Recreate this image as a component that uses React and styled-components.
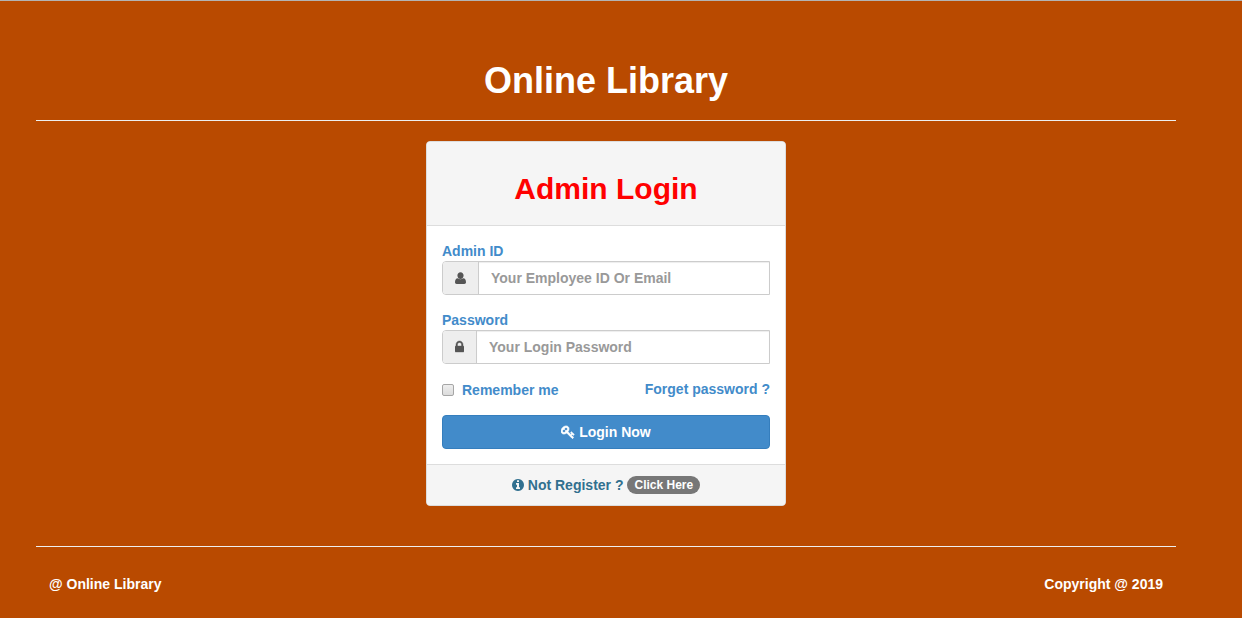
import React from "react";
import styled, { createGlobalStyle } from "styled-components";

const GlobalStyle = createGlobalStyle`
  *, *::before, *::after { box-sizing: border-box; }
  body {
    margin: 0;
    background: #b94a00;
    color: #fff;
    font: bold 14px/20px "Liberation Sans", Arial, Helvetica, sans-serif;
  }
`;

const Page = styled.div`
  border-top: 1px solid #b3b3b3;
  padding-right: 30px;
`;

const Container = styled.div`
  max-width: 1170px;
  margin: 0 auto;
  padding: 60px 15px 0;
`;

const SiteTitle = styled.h1`
  margin: 0;
  font-size: 36px;
  line-height: 39px;
  text-align: center;
`;

const Divider = styled.hr`
  margin: 20px 0;
  border: 0;
  border-top: 1px solid #eee;
`;

const Panel = styled.main`
  max-width: 360px;
  margin: 0 auto 40px;
  background: #fff;
  border: 1px solid #ddd;
  border-radius: 4px;
  overflow: hidden;
`;

const PanelHeader = styled.header`
  padding: 30px 15px 20px;
  background: #f5f5f5;
  border-bottom: 1px solid #ddd;
`;

const PanelTitle = styled.h2`
  margin: 0;
  color: #f00;
  font-size: 30px;
  line-height: 33px;
  text-align: center;
`;

const Form = styled.form`
  display: flex;
  flex-direction: column;
  gap: 15px;
  padding: 15px;
`;

const Field = styled.div`
  display: flex;
  flex-direction: column;
`;

const Label = styled.label`
  color: #428bca;
`;

const InputGroup = styled.div`
  display: flex;
  height: 34px;
  border: 1px solid #ccc;
  border-radius: 4px 0 0 4px;
`;

const Addon = styled.span`
  display: flex;
  align-items: center;
  padding: 0 12px;
  color: #555;
  background: #eee;
  border-right: 1px solid #ccc;
  border-radius: 3px 0 0 3px;
`;

const TextInput = styled.input`
  flex: 1;
  min-width: 0;
  padding: 0 12px;
  border: 0;
  background: #fff;
  box-shadow: inset 0 1px 1px rgba(0, 0, 0, 0.075);
  color: #555;
  font: inherit;
  &::placeholder { color: #999; opacity: 1; }
`;

const Options = styled.div`
  display: flex;
  justify-content: space-between;
  height: 21px;
`;

const Remember = styled.label`
  display: flex;
  align-items: flex-end;
  gap: 8px;
  color: #428bca;
`;

const Checkbox = styled.input`
  appearance: none;
  width: 12px;
  height: 12px;
  margin: 0 0 4px;
  border: 1px solid #a6a6a6;
  border-radius: 2px;
  background: linear-gradient(#eee, #dcdcdc);
  &:checked { background: #428bca; }
`;

const TextLink = styled.a`
  color: #428bca;
  text-decoration: none;
`;

const LoginButton = styled.button`
  display: flex;
  align-items: center;
  justify-content: center;
  gap: 4px;
  height: 34px;
  color: #fff;
  background: #428bca;
  border: 1px solid #357ebd;
  border-radius: 4px;
  font: inherit;
  cursor: pointer;
`;

const PanelFooter = styled.footer`
  display: flex;
  align-items: center;
  justify-content: center;
  gap: 4px;
  padding: 10px 15px;
  color: #31708f;
  background: #f5f5f5;
  border-top: 1px solid #ddd;
`;

const Pill = styled.a`
  padding: 2px 7px;
  color: #fff;
  background: #777;
  border-radius: 10px;
  font-size: 12px;
  line-height: 14px;
  text-decoration: none;
`;

const PageFooter = styled.footer`
  display: flex;
  justify-content: space-between;
  padding: 7px 13px 24px;
`;

const Icon = styled.svg`
  display: block;
  flex: none;
  height: 14px;
  fill: currentColor;
  stroke: currentColor;
`;

const glyphs = {
  user: {
    box: "0 0 11 14",
    width: 11,
    weight: 0,
    d: "M5.500 1.200C7.300 1.200 8.600 2.600 8.600 4.500S7.300 8 5.500 8 2.400 6.400 2.400 4.500 3.700 1.200 5.500 1.200zM2.800 7.200C4.200 8.700 6.800 8.700 8.200 7.200 10.200 7.300 11 9 11 11.300 11 12.400 10.300 13 9.300 13H1.700C.7 13 0 12.400 0 11.300 0 9 .8 7.300 2.800 7.200z",
  },
  lock: {
    box: "0 0 1152 1792",
    width: 9,
    weight: 50,
    d: "M320 768h512v-192q0-106-75-181t-181-75-181 75-75 181v192zm832 96v576q0 40-28 68t-68 28h-960q-40 0-68-28t-28-68v-576q0-40 28-68t68-28h32v-192q0-184 132-316t316-132 316 132 132 316v192h32q40 0 68 28t28 68z",
  },
  key: {
    box: "0 0 1792 1792",
    width: 14,
    weight: 90,
    d: "M832 512q0-80-56-136t-136-56-136 56-56 136q0 42 19 83-41-19-83-19-80 0-136 56t-56 136 56 136 136 56 136-56 56-136q0-42-19-83 41 19 83 19 80 0 136-56t56-136zm851 704q0 17-49 66t-66 49q-9 0-28.5-16t-36.5-33-38.5-40-24.5-26l-96 96 220 220q28 28 28 68 0 42-39 81t-81 39q-40 0-68-28l-671-671q-176 131-365 131-163 0-265.500-102.500t-102.500-265.500q0-160 95-313t248-248 313-95q163 0 265.500 102.500t102.500 265.500q0 189-131 365l355 355 96-96q-3-3-26-24.500t-40-38.500-33-36.500-16-28.500q0-17 49-66t66-49q13 0 23 10 6 6 46 44.500t82 79.500 86.500 86 73 78 28.500 41z",
  },
  info: {
    box: "0 0 1536 1792",
    width: 12,
    weight: 0,
    d: "M1024 1376v-160q0-14-9-23t-23-9h-96v-512q0-14-9-23t-23-9h-320q-14 0-23 9t-9 23v160q0 14 9 23t23 9h96v320h-96q-14 0-23 9t-9 23v160q0 14 9 23t23 9h448q14 0 23-9t9-23zm-128-896v-160q0-14-9-23t-23-9h-192q-14 0-23 9t-9 23v160q0 14 9 23t23 9h192q14 0 23-9t9-23zm640 416q0 209-103 385.500t-279.500 279.500-385.500 103-385.500-103-279.500-279.500-103-385.500 103-385.500 279.500-279.500 385.500-103 385.500 103 279.500 279.500 103 385.500z",
  },
};

function Glyph({ name }) {
  const { box, width, weight, d } = glyphs[name];
  return (
    <Icon viewBox={box} width={width} strokeWidth={weight} aria-hidden="true">
      <path d={d} />
    </Icon>
  );
}

function IconField({ id, label, icon, ...input }) {
  return (
    <Field>
      <Label htmlFor={id}>{label}</Label>
      <InputGroup>
        <Addon>
          <Glyph name={icon} />
        </Addon>
        <TextInput id={id} {...input} />
      </InputGroup>
    </Field>
  );
}

export default function App() {
  return (
    <Page>
      <GlobalStyle />
      <Container>
        <SiteTitle>Online Library</SiteTitle>
        <Divider />
        <Panel>
          <PanelHeader>
            <PanelTitle>Admin Login</PanelTitle>
          </PanelHeader>
          <Form onSubmit={(e) => e.preventDefault()}>
            <IconField
              id="admin-id"
              label="Admin ID"
              icon="user"
              type="text"
              placeholder="Your Employee ID Or Email"
            />
            <IconField
              id="password"
              label="Password"
              icon="lock"
              type="password"
              placeholder="Your Login Password"
            />
            <Options>
              <Remember htmlFor="remember">
                <Checkbox id="remember" type="checkbox" />
                Remember me
              </Remember>
              <TextLink href="#forgot">Forget password ?</TextLink>
            </Options>
            <LoginButton type="submit">
              <Glyph name="key" />
              Login Now
            </LoginButton>
          </Form>
          <PanelFooter>
            <Glyph name="info" />
            Not Register ?
            <Pill href="#register">Click Here</Pill>
          </PanelFooter>
        </Panel>
        <Divider />
        <PageFooter>
          <span>@ Online Library</span>
          <span>Copyright @ 2019</span>
        </PageFooter>
      </Container>
    </Page>
  );
}
